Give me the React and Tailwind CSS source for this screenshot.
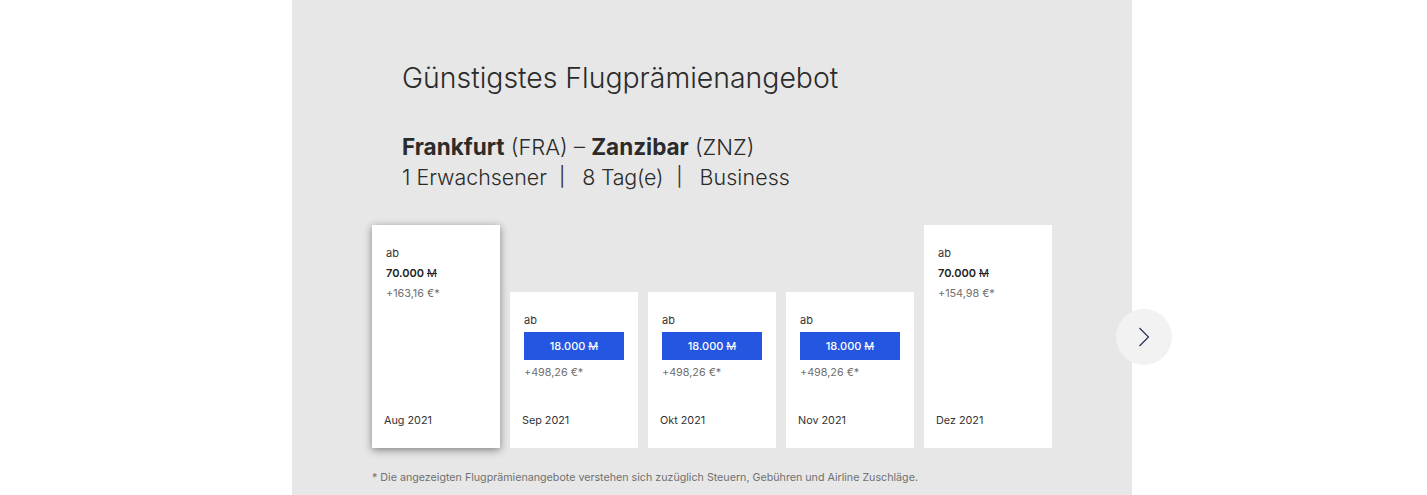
const months = [
  { month: 'Aug 2021', miles: '70.000', extra: '+163,16 €*', tall: true, active: true },
  { month: 'Sep 2021', miles: '18.000', extra: '+498,26 €*', best: true },
  { month: 'Okt 2021', miles: '18.000', extra: '+498,26 €*', best: true },
  { month: 'Nov 2021', miles: '18.000', extra: '+498,26 €*', best: true },
  { month: 'Dez 2021', miles: '70.000', extra: '+154,98 €*', tall: true },
]

function Miles({ value }) {
  return (
    <>
      {value} <span className="font-normal line-through">M</span>
    </>
  )
}

function MonthCard({ month, miles, extra, tall, best, active }) {
  return (
    <div className={`flex w-[128px] flex-col bg-white px-3 ${tall ? 'h-[223px]' : 'h-[156px]'} ${active ? 'shadow-[0_2px_8px_rgba(0,0,0,0.45)]' : ''}`}>
      <div className="flex-1 px-0.5 pt-[21px]">
        <p className="text-[11px] leading-[14px] text-[#333]">ab</p>
        {best ? (
          <p className="mt-[5px] flex h-[28px] w-[100px] items-center justify-center bg-[#2456e2] text-[11px] font-medium text-white">
            <span><Miles value={miles} /></span>
          </p>
        ) : (
          <p className="mt-[6px] text-[11px] font-semibold leading-[14px] text-[#222]">
            <Miles value={miles} />
          </p>
        )}
        <p className={`text-[10.8px] leading-[14px] text-[#707070] ${best ? 'mt-[6px]' : 'mt-[7px]'}`}>{extra}</p>
      </div>
      <p className="mb-[20px] text-[10.8px] leading-[14px] text-[#333]">{month}</p>
    </div>
  )
}

export default function App() {
  return (
    <div className="h-[495px] overflow-hidden bg-white font-['Inter',sans-serif]">
      <div className="relative ml-[292px] h-full w-[840px] bg-[#e7e7e7] px-[80px]">
        <div className="pl-[30px] pt-[60px] font-light text-[#2b2b2b]">
          <h1 className="text-[28.4px] font-light leading-[36px]">Günstigstes Flugprämienangebot</h1>
          <p className="mt-[36px] text-[22px] leading-[30px]">
            <b className="text-[22.5px] font-bold">Frankfurt</b> (FRA) – <b className="text-[22.5px] font-bold">Zanzibar</b> (ZNZ)
          </p>
          <p className="flex text-[21.4px] leading-[30px]">
            <span>1 Erwachsener</span>
            <span className="ml-[12px] text-[19px] font-normal text-[#3a3a3a]">|</span>
            <span className="ml-[17px] tracking-[-0.2px]">8 Tag(e)</span>
            <span className="ml-[13px] text-[19px] font-normal text-[#3a3a3a]">|</span>
            <span className="ml-[17px] tracking-[0.1px]">Business</span>
          </p>
        </div>
        <div className="mt-[33px] flex items-end gap-[10px]">
          {months.map((m) => (
            <MonthCard key={m.month} {...m} />
          ))}
        </div>
        <p className="mt-[22px] text-[10.7px] leading-[16px] text-[#707070]">* Die angezeigten Flugprämienangebote verstehen sich zuzüglich Steuern, Gebühren und Airline Zuschläge.</p>
        <button className="absolute left-[824px] top-[309px] flex h-[56px] w-[56px] items-center justify-center rounded-full bg-[#f2f2f2] text-[#1f2a50]">
          <svg width="12" height="20" viewBox="0 0 12 20" fill="none" stroke="currentColor" strokeWidth="1.1">
            <polyline points="1.5,1 10.5,10 1.5,19" />
          </svg>
        </button>
      </div>
    </div>
  )
}
